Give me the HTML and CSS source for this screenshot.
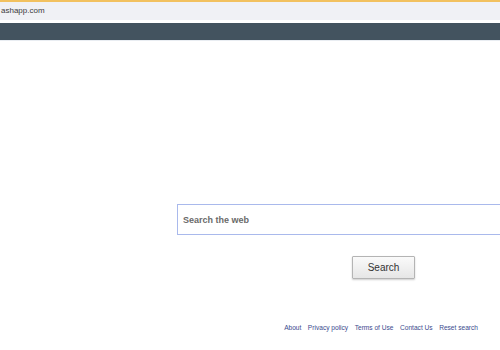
FILE: index.html
```html
<!DOCTYPE html>
<html lang="en">
<head>
    <meta charset="UTF-8">
    <meta name="viewport" content="width=device-width, initial-scale=1.0">
    <title>Search</title>
    <link rel="stylesheet" href="styles.css">
</head>
<body>
    <div class="chrome">
        <div class="address">ashapp.com</div>
    </div>
    <div class="navbar"></div>

    <main class="home">
        <form class="search-form" onsubmit="return false;">
            <input type="text" class="search-input" placeholder="Search the web">
            <button type="submit" class="search-btn">Search</button>
        </form>
    </main>

    <footer class="links">
        <a href="#">About</a>
        <a href="#">Privacy policy</a>
        <a href="#">Terms of Use</a>
        <a href="#">Contact Us</a>
        <a href="#">Reset search</a>
    </footer>
</body>
</html>
```

FILE: styles.css
```css
html, body {
    margin: 0;
    padding: 0;
    background: #ffffff;
    overflow: hidden;
}
body {
    font-family: 'Liberation Sans', Arial, sans-serif;
    width: 500px;
    height: 350px;
}
.chrome {
    border-top: 2px solid #f2c15f;
    background-color: #f0f1f5;
    height: 18px;
    margin-bottom: 3px;
}
.address {
    padding-left: 1px;
    font-size: 8px;
    line-height: 18px;
    color: #3c3c3c;
}
.navbar {
    height: 17px;
    background-color: #43535f;
    border-bottom: 1px solid #e9edf2;
}
.home {
    padding-top: 163px;
}
/* the search box runs on past the right edge of the window */
.search-form {
    margin-left: 177px;
    display: flex;
    flex-direction: column;
    align-items: flex-start;
}
.search-input {
    width: 323px;
    height: 31px;
    box-sizing: border-box;
    border: 1px solid #a9b9ec;
    border-right: none;
    padding: 0 5px;
    margin: 0;
    font-family: 'Liberation Sans', Arial, sans-serif;
    font-size: 9px;
    font-weight: bold;
    color: #444;
    outline: none;
}
.search-input::placeholder {
    color: #6a6a6a;
    opacity: 1;
}
.search-btn {
    margin: 21px 0 0 175px;
    width: 63px;
    height: 23px;
    box-sizing: border-box;
    border: 1px solid #b4b4b4;
    border-radius: 1px;
    background: linear-gradient(#fafafa, #e6e6e6);
    box-shadow: 0 1px 2px rgba(0,0,0,0.2);
    font-family: 'Liberation Sans', Arial, sans-serif;
    font-size: 10px;
    color: #333;
    padding: 0;
    cursor: pointer;
}
.links {
    margin-top: 44px;
    display: flex;
    justify-content: flex-end;
    gap: 6.5px;
    padding-right: 22px;
    font-size: 6.6px;
    line-height: 10px;
}
.links a {
    color: #3b4a8e;
    text-decoration: none;
}
.links a:hover {
    text-decoration: underline;
}
```
